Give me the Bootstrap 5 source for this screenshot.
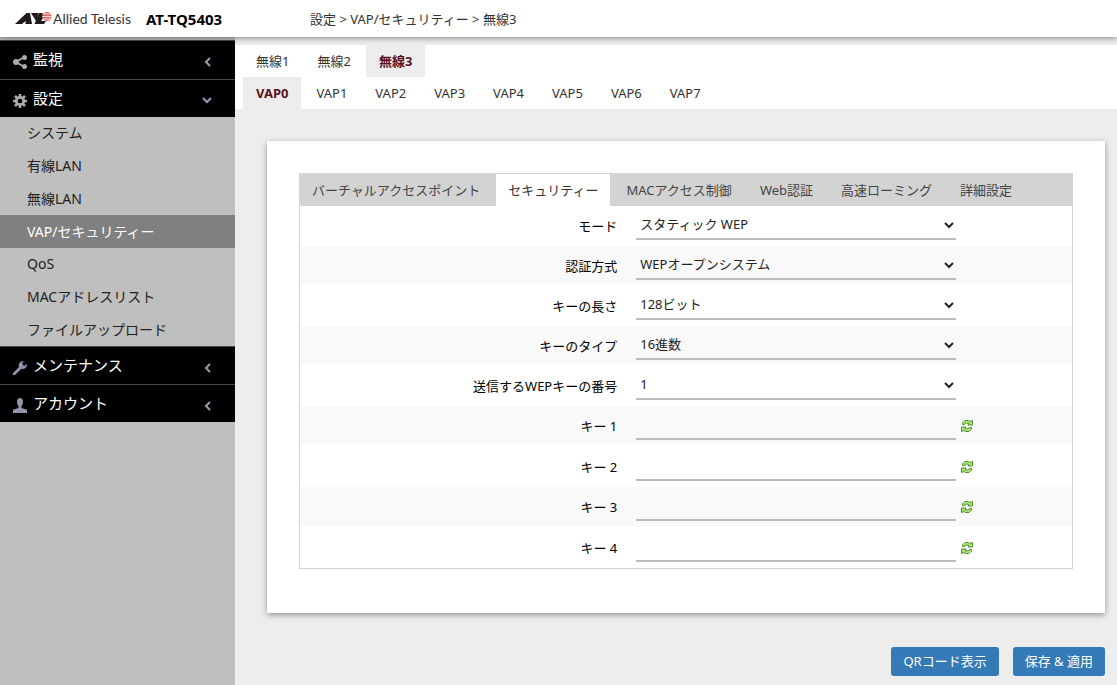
<!DOCTYPE html>
<html lang="ja">
<head>
<meta charset="utf-8">
<meta name="viewport" content="width=device-width, initial-scale=1">
<title>AT-TQ5403</title>
<link href="https://cdn.jsdelivr.net/npm/bootstrap@5.3.0/dist/css/bootstrap.min.css" rel="stylesheet">
<style>
  body { font-family: "Noto Sans", "Noto Sans CJK JP", sans-serif; font-size: 13px; line-height: 20px; color: #333; background: #ededed; }
  a { color: inherit; text-decoration: none; }
  .topbar { height: 37px; background: #fff; box-shadow: 0 1px 6px rgba(0,0,0,.45); z-index: 5; }
  .brand-area { width: 310px; padding-left: 14px; }
  .model { font-size: 15px; font-weight: 700; color: #000; margin-left: 15px; }

  .sidebar { width: 235px; background: #bfbfbf; padding-top: 3px; }
  .side-head { height: 38px; background: #000; border-top: 1px solid #484848; color: #fff; font-size: 15px; padding: 0 23px 0 12px; }
  .side-head svg { margin-top: 4px; }
  .side-head .caption { margin-left: 5px; padding-bottom: 2px; }
  .side-first { height: 39px; }
  .submenu { height: 229px; font-size: 14px; color: #222; }
  .submenu a { padding-left: 27px; }
  .submenu a.active { background: #808080; color: #fff; }

  .tabbars { background: #fff; margin-top: 8px; padding-left: 8px; }
  .tabbars ul { gap: 2px; }
  .box-tabs { gap: 4px; }
  .tabbars a { height: 32px; padding: 0 13px; display: flex; align-items: center; }
  .tabbars a.active { background: #ededed; color: #5a1223; font-weight: 700; }

  .panel { background: #fff; margin: 32px 12px 34px 32px; padding: 32px 32px 44px; box-shadow: 0 2px 6px rgba(0,0,0,.38); }
  .box { border: 1px solid #d3d3d3; }
  .box-tabs { background: #d3d3d3; }
  .box-tabs a { height: 32px; padding: 0 12px; display: flex; align-items: center; color: #444; }
  .box-tabs a.active { background: #fff; color: #333; }

  .setting { height: 42px; padding-top: 2px; }
  .setting:first-child { height: 40px; padding-top: 0; }
  .setting:nth-child(even) { height: 38px; padding-top: 0; background: #f9f9f9; }
  .key-row:nth-child(even) { height: 39px; }
  .setting label { width: 42%; padding: 10px 7px 0 0; color: #000; text-align: right; }
  .field { width: 320px; height: 34px; margin-left: 12px; padding: 4px 4px 0; border: 0; border-bottom: 2px solid #bbb; border-radius: 0; background-color: transparent; font-size: 13px; line-height: 20px; color: #222; }
  .field:focus { background-color: transparent; }
  select.field { background-size: 10px 8px; background-position: right 2px top 15px; background-image: url("data:image/svg+xml,%3Csvg xmlns='http://www.w3.org/2000/svg' viewBox='0 0 10 8'%3E%3Cpath d='M1 2l4 4 4-4' fill='none' stroke='%23222' stroke-width='2'/%3E%3C/svg%3E"); }
  .renew { padding: 0; border: 0; background: none; width: 12px; height: 14px; margin: 13px 0 0 5px; display: flex; }

  .actions { gap: 14px; padding-right: 12px; }
  .btn-action { height: 29px; padding: 0 12px 2px; font-size: 13px; line-height: 20px; color: #fff; background: #337ab7; border: 0; border-radius: 3px; }
  .btn-action:hover { background: #286090; color: #fff; }
</style>
</head>
<body class="min-vh-100 d-flex flex-column">
<svg class="d-none">
  <symbol id="left" viewBox="0 0 8 10"><path d="M6 1L2 5l4 4" fill="none" stroke="#979eb5" stroke-width="2"/></symbol>
  <symbol id="down" viewBox="0 0 10 8"><path d="M1 1l4 4 4-4" fill="none" stroke="#979eb5" stroke-width="2"/></symbol>
  <symbol id="renew" viewBox="0 0 12 14">
    <g fill="#b0e57c" stroke="#4d8f2c">
      <path d="M1.500 5.500V4L4 1.500h3.500l1.500 1 2.500-1V6H7l1-1.500L5.500 4 3 5.500z"/>
      <path d="M1.500 5.500V4L4 1.500h3.500l1.500 1 2.500-1V6H7l1-1.500L5.500 4 3 5.500z" transform="rotate(180 6 7)"/>
    </g>
  </symbol>
</svg>

<header class="topbar d-flex align-items-center position-relative">
  <div class="brand-area d-flex align-items-center">
    <a href="#" aria-label="Allied Telesis">
      <svg width="117" height="20" viewBox="0 0 117 20" class="d-block">
        <path d="M1 15L12.500 4H16l2 11h-6.500v-3L8 15zM17 4h7.500L22 12zM20.500 15L25 4h9l-7 8h5l-2 3z" fill="#231a1c"/>
        <circle cx="33" cy="7.500" r="4.500" fill="#d96a62"/>
        <path d="M28 5h10M28 7.500h10M28 10h10" stroke="#f8dedb" stroke-width="1"/>
        <text x="39" y="15" font-family="Lato, sans-serif" font-size="14" fill="#333">Allied Telesis</text>
      </svg>
    </a>
    <span class="model">AT-TQ5403</span>
  </div>
  <nav aria-label="breadcrumb">設定 &gt; VAP/セキュリティー &gt; 無線3</nav>
</header>

<div class="d-flex flex-grow-1">
  <nav class="sidebar flex-shrink-0">
    <a href="#" class="side-head side-first d-flex align-items-center">
      <svg width="16" height="16" viewBox="0 0 16 16" fill="#aaa"><path d="M12.500 3L4 8l8.500 5" fill="none" stroke="#aaa" stroke-width="2"/><circle cx="4" cy="8" r="3"/><circle cx="12.500" cy="3.500" r="2.500"/><circle cx="12.500" cy="12.500" r="2.500"/></svg>
      <span class="caption">監視</span>
      <svg class="ms-auto" width="8" height="10"><use href="#left"/></svg>
    </a>
    <a href="#" class="side-head d-flex align-items-center">
      <svg width="16" height="16" viewBox="0 0 16 16"><circle cx="8" cy="8" r="3.700" fill="none" stroke="#aaa" stroke-width="2.800"/><path d="M8 1v3M8 12v3M1 8h3M12 8h3M3 3l2 2M11 11l2 2M13 3l-2 2M5 11l-2 2" stroke="#aaa" stroke-width="2.600"/></svg>
      <span class="caption">設定</span>
      <svg class="ms-auto" width="10" height="8"><use href="#down"/></svg>
    </a>
    <div class="submenu d-flex flex-column">
      <a href="#" class="flex-fill d-flex align-items-center">システム</a>
      <a href="#" class="flex-fill d-flex align-items-center">有線LAN</a>
      <a href="#" class="flex-fill d-flex align-items-center">無線LAN</a>
      <a href="#" class="flex-fill d-flex align-items-center active">VAP/セキュリティー</a>
      <a href="#" class="flex-fill d-flex align-items-center">QoS</a>
      <a href="#" class="flex-fill d-flex align-items-center">MACアドレスリスト</a>
      <a href="#" class="flex-fill d-flex align-items-center">ファイルアップロード</a>
    </div>
    <a href="#" class="side-head d-flex align-items-center">
      <svg width="16" height="16" viewBox="0 0 16 16"><path d="M1 13l6-6C6 4 8 1 12 1L10 3.500 12 6l3-2c0 4-3 5.500-6 5L3 15c-1.500.8-3-.7-2-2z" fill="#8f95aa"/></svg>
      <span class="caption">メンテナンス</span>
      <svg class="ms-auto" width="8" height="10"><use href="#left"/></svg>
    </a>
    <a href="#" class="side-head d-flex align-items-center">
      <svg width="16" height="16" viewBox="0 0 16 16"><path d="M8 0c2 0 3 1.300 3 3.500S10.500 7 9.500 8v2l5 1.500c.4.300.5.500.5 1V15H1v-2.500c0-.5.100-.7.500-1l5-1.500V8C5.500 7 5 5.700 5 3.500S6 0 8 0z" fill="#8f95aa"/></svg>
      <span class="caption">アカウント</span>
      <svg class="ms-auto" width="8" height="10"><use href="#left"/></svg>
    </a>
  </nav>

  <main class="flex-grow-1">
    <nav class="tabbars">
      <ul class="list-unstyled d-flex mb-0">
        <li><a href="#">無線1</a></li>
        <li><a href="#">無線2</a></li>
        <li><a href="#" class="active">無線3</a></li>
      </ul>
      <ul class="list-unstyled d-flex mb-0">
        <li><a href="#" class="active">VAP0</a></li>
        <li><a href="#">VAP1</a></li>
        <li><a href="#">VAP2</a></li>
        <li><a href="#">VAP3</a></li>
        <li><a href="#">VAP4</a></li>
        <li><a href="#">VAP5</a></li>
        <li><a href="#">VAP6</a></li>
        <li><a href="#">VAP7</a></li>
      </ul>
    </nav>

    <section class="panel">
      <div class="box">
        <ul class="box-tabs list-unstyled d-flex mb-0">
          <li><a href="#">バーチャルアクセスポイント</a></li>
          <li><a href="#" class="active">セキュリティー</a></li>
          <li><a href="#">MACアクセス制御</a></li>
          <li><a href="#">Web認証</a></li>
          <li><a href="#">高速ローミング</a></li>
          <li><a href="#">詳細設定</a></li>
        </ul>
        <form id="wep">
          <div class="setting d-flex"><label for="mode">モード</label><select id="mode" class="form-select field"><option>スタティック WEP</option></select></div>
          <div class="setting d-flex"><label for="auth">認証方式</label><select id="auth" class="form-select field"><option>WEPオープンシステム</option></select></div>
          <div class="setting d-flex"><label for="len">キーの長さ</label><select id="len" class="form-select field"><option>128ビット</option></select></div>
          <div class="setting d-flex"><label for="type">キーのタイプ</label><select id="type" class="form-select field"><option>16進数</option></select></div>
          <div class="setting d-flex"><label for="index">送信するWEPキーの番号</label><select id="index" class="form-select field"><option>1</option></select></div>
          <div class="setting key-row d-flex"><label for="key1">キー 1</label><input id="key1" type="text" class="form-control field"><button type="button" class="renew" aria-label="キー 1 更新"><svg width="12" height="14"><use href="#renew"/></svg></button></div>
          <div class="setting key-row d-flex"><label for="key2">キー 2</label><input id="key2" type="text" class="form-control field"><button type="button" class="renew" aria-label="キー 2 更新"><svg width="12" height="14"><use href="#renew"/></svg></button></div>
          <div class="setting key-row d-flex"><label for="key3">キー 3</label><input id="key3" type="text" class="form-control field"><button type="button" class="renew" aria-label="キー 3 更新"><svg width="12" height="14"><use href="#renew"/></svg></button></div>
          <div class="setting key-row d-flex"><label for="key4">キー 4</label><input id="key4" type="text" class="form-control field"><button type="button" class="renew" aria-label="キー 4 更新"><svg width="12" height="14"><use href="#renew"/></svg></button></div>
        </form>
      </div>
    </section>

    <div class="actions d-flex justify-content-end">
      <button type="button" class="btn btn-action">QRコード表示</button>
      <button type="submit" form="wep" class="btn btn-action">保存 &amp; 適用</button>
    </div>
  </main>
</div>
<script src="https://cdn.jsdelivr.net/npm/bootstrap@5.3.0/dist/js/bootstrap.bundle.min.js"></script>
</body>
</html>
